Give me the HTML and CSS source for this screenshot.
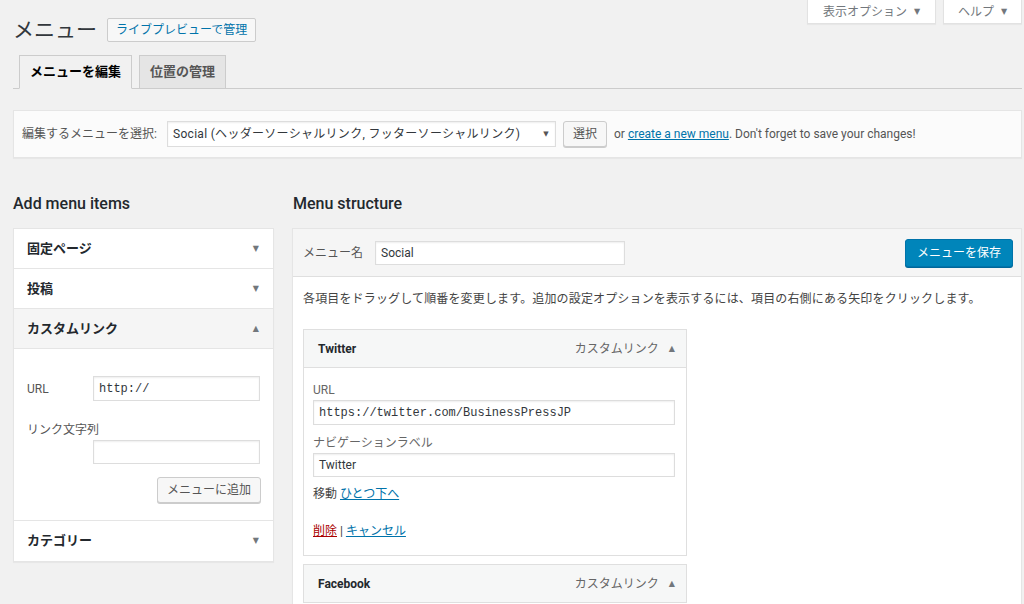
FILE: index.html
```html
<!DOCTYPE html>
<html lang="ja">
<head>
<meta charset="utf-8">
<title>メニュー</title>
<link rel="stylesheet" href="styles.css">
</head>
<body>
<div class="wrap">
  <div class="screen-meta">
    <button class="meta-btn meta-options">表示オプション <span class="tri">▼</span></button>
    <button class="meta-btn meta-help">ヘルプ <span class="tri">▼</span></button>
  </div>
  <div class="title-row">
    <h1 class="page-title">メニュー</h1>
    <a class="title-action" href="#">ライブプレビューで管理</a>
  </div>
  <nav class="tabs">
    <a class="tab tab-active" href="#">メニューを編集</a>
    <a class="tab" href="#">位置の管理</a>
  </nav>

  <div class="manage">
    <span class="manage-label">編集するメニューを選択:</span>
    <div class="select-box"><span>Social (ヘッダーソーシャルリンク, フッターソーシャルリンク)</span><span class="tri small">▼</span></div>
    <button class="btn btn-select">選択</button>
    <span class="manage-text">or <a href="#" class="link">create a new menu</a>. Don't forget to save your changes!</span>
  </div>

  <div class="cols">
    <div class="col-left">
      <h2 class="col-title">Add menu items</h2>
      <div class="acc">
        <div class="acc-head"><span>固定ページ</span><span class="tri">▼</span></div>
        <div class="acc-head"><span>投稿</span><span class="tri">▼</span></div>
        <div class="acc-head acc-open"><span>カスタムリンク</span><span class="tri">▲</span></div>
        <div class="acc-body">
          <div class="field-row">
            <span class="field-label">URL</span>
            <div class="input input-mono input-url">http://</div>
          </div>
          <div class="field-label field-label-block">リンク文字列</div>
          <div class="input input-text"></div>
          <div class="btn-row"><button class="btn btn-add">メニューに追加</button></div>
        </div>
        <div class="acc-head acc-last"><span>カテゴリー</span><span class="tri">▼</span></div>
      </div>
    </div>

    <div class="col-right">
      <h2 class="col-title">Menu structure</h2>
      <div class="structure">
        <div class="structure-head">
          <span class="name-label">メニュー名</span>
          <div class="input input-name">Social</div>
          <button class="btn-primary">メニューを保存</button>
        </div>
        <div class="structure-body">
          <p class="hint">各項目をドラッグして順番を変更します。追加の設定オプションを表示するには、項目の右側にある矢印をクリックします。</p>
          <div class="item">
            <div class="item-head"><span class="item-title">Twitter</span><span class="item-type">カスタムリンク <span class="tri">▲</span></span></div>
            <div class="item-settings">
              <div class="set-label">URL</div>
              <div class="input input-mono input-wide">https://twitter.com/BusinessPressJP</div>
              <div class="set-label set-label-2">ナビゲーションラベル</div>
              <div class="input input-wide input-label">Twitter</div>
              <div class="move">移動 <a href="#" class="link">ひとつ下へ</a></div>
              <div class="actions"><a href="#" class="link-del">削除</a> | <a href="#" class="link">キャンセル</a></div>
            </div>
          </div>
          <div class="item item-2">
            <div class="item-head"><span class="item-title">Facebook</span><span class="item-type">カスタムリンク <span class="tri">▲</span></span></div>
          </div>
        </div>
      </div>
    </div>
  </div>
</div>
</body>
</html>
```

FILE: styles.css
```css
* { box-sizing: border-box; }
html, body { margin: 0; padding: 0; }
body {
  background: #f1f1f1;
  font-family: Roboto, "Noto Sans CJK JP", sans-serif;
  font-size: 12px;
  line-height: 16px;
  color: #444;
  width: 1024px;
  height: 604px;
  overflow: hidden;
}
.wrap { padding: 0 2px 0 13px; }

.tri { font-size: 8px; color: #72777c; font-family: "DejaVu Sans", sans-serif; }
.tri.small { font-size: 7px; color: #555; }

/* screen meta */
.screen-meta { float: right; display: flex; gap: 7px; }
.meta-btn {
  height: 24px;
  background: #fff;
  border: 1px solid #e2e2e2;
  border-top: none;
  box-shadow: 0 1px 1px rgba(0,0,0,.04);
  color: #72777c;
  font: inherit;
  display: flex;
  align-items: center;
  justify-content: center;
  gap: 7px;
  padding: 0;
}
.meta-options { width: 129px; }
.meta-help { width: 79px; }

/* title */
.title-row { padding-top: 18px; display: flex; align-items: center; height: 42px; }
.page-title { margin: 0; font-size: 21px; font-weight: 400; line-height: 24px; color: #32373c; }
.title-action {
  margin-left: 10px;
  height: 24px;
  padding: 0 8px;
  border: 1px solid #ccc;
  background: #f7f7f7;
  color: #0073aa;
  text-decoration: none;
  line-height: 22px;
  border-radius: 2px;
}

/* tabs */
.tabs {
  margin-top: 13px;
  display: flex;
  gap: 7px;
  padding-left: 6px;
  border-bottom: 1px solid #ccc;
}
.tab {
  height: 34px;
  margin-bottom: -1px;
  padding: 0 10px;
  border: 1px solid #ccc;
  background: #e5e5e5;
  color: #555;
  font-size: 13px;
  font-weight: 700;
  line-height: 32px;
  text-decoration: none;
}
.tab-active { background: #f1f1f1; border-bottom-color: #f1f1f1; color: #000; }

/* manage bar */
.manage {
  margin-top: 21px;
  height: 48px;
  border: 1px solid #e5e5e5;
  background: #fbfbfb;
  box-shadow: 0 1px 1px rgba(0,0,0,.04);
  display: flex;
  align-items: center;
  padding: 0 8px;
}
.manage-label { color: #555; width: 145px; }
.select-box {
  width: 389px;
  height: 26px;
  border: 1px solid #ddd;
  background: #fff;
  box-shadow: inset 0 1px 2px rgba(0,0,0,.07);
  display: flex;
  align-items: center;
  justify-content: space-between;
  padding: 0 6px 0 5px;
  color: #32373c;
  letter-spacing: 0.3px;
}
.btn {
  font: inherit;
  background: #f7f7f7;
  border: 1px solid #ccc;
  box-shadow: 0 1px 0 #ccc;
  color: #555;
  border-radius: 3px;
  padding: 0;
}
.btn-select { margin-left: 7px; width: 44px; height: 26px; }
.manage-text { margin-left: 7px; color: #555; }
.link { color: #0073aa; text-decoration: underline; }
.link-del { color: #a00; text-decoration: underline; }

/* columns */
.cols {
  margin-top: 36px;
  display: grid;
  grid-template-columns: 261px 730px;
  column-gap: 18px;
}
.col-title {
  margin: 0 0 14px;
  font-size: 16px;
  font-weight: 500;
  line-height: 20px;
  color: #23282d;
}
.col-right .col-title { padding-left: 1px; }

/* accordion */
.acc {
  background: #fff;
  border: 1px solid #e5e5e5;
  box-shadow: 0 1px 1px rgba(0,0,0,.04);
}
.acc-head {
  height: 40px;
  display: flex;
  align-items: center;
  justify-content: space-between;
  padding: 0 14px 0 13px;
  font-size: 13px;
  font-weight: 700;
  color: #23282d;
  border-bottom: 1px solid #e5e5e5;
}
.acc-open { background: #f5f5f5; }
.acc-last { border-bottom: none; }
.acc-body { padding: 27px 12px 17px 13px; border-bottom: 1px solid #e5e5e5; }
.field-row { display: flex; align-items: center; }
.field-label { color: #555; width: 66px; }
.field-label-block { margin-top: 21px; width: auto; }
.input {
  background: #fff;
  border: 1px solid #ddd;
  box-shadow: inset 0 1px 2px rgba(0,0,0,.07);
  color: #32373c;
  display: flex;
  align-items: center;
  padding: 0 5px;
}
.input-mono { font-family: "Liberation Mono", "DejaVu Sans Mono", monospace; font-size: 12px; }
.input-url { width: 167px; height: 25px; }
.input-text { margin: 2px 0 0 66px; width: 167px; height: 24px; }
.btn-row { display: flex; justify-content: flex-end; margin-top: 13px; }
.btn-add { width: 104px; height: 26px; }

/* structure */
.structure {
  background: #fff;
  border: 1px solid #e5e5e5;
  box-shadow: 0 1px 1px rgba(0,0,0,.04);
  height: 400px;
}
.structure-head {
  height: 48px;
  background: #f5f5f5;
  border-bottom: 1px solid #dfdfdf;
  display: flex;
  align-items: center;
  padding: 0 8px 0 10px;
}
.name-label { color: #555; width: 72px; }
.input-name { width: 250px; height: 24px; }
.btn-primary {
  margin-left: auto;
  width: 108px;
  height: 28px;
  font: inherit;
  color: #fff;
  background: #0085ba;
  border: 1px solid #0073aa;
  border-radius: 3px;
  box-shadow: 0 1px 0 #006799;
  padding: 0;
}
.structure-body { padding: 14px 10px 0; }
.hint { margin: 0; color: #444; line-height: 16px; letter-spacing: 0.15px; }
.item { width: 384px; margin-top: 22px; }
.item-2 { margin-top: 8px; }
.item-head {
  height: 39px;
  background: #f6f7f7;
  border: 1px solid #dfdfdf;
  display: flex;
  align-items: center;
  justify-content: space-between;
  padding: 0 11px 0 14px;
}
.item-title { font-weight: 700; color: #23282d; }
.item-type { color: #666; display: flex; align-items: center; gap: 10px; }
.item-settings {
  border: 1px solid #dfdfdf;
  border-top: none;
  padding: 14px 11px 16px 9px;
}
.set-label { color: #666; }
.input-wide { width: 362px; height: 25px; margin-top: 2px; }
.set-label-2 { margin-top: 10px; }
.input-label { height: 24px; margin-top: 2px; }
.move { margin-top: 9px; color: #444; }
.actions { margin-top: 21px; color: #444; }
```
